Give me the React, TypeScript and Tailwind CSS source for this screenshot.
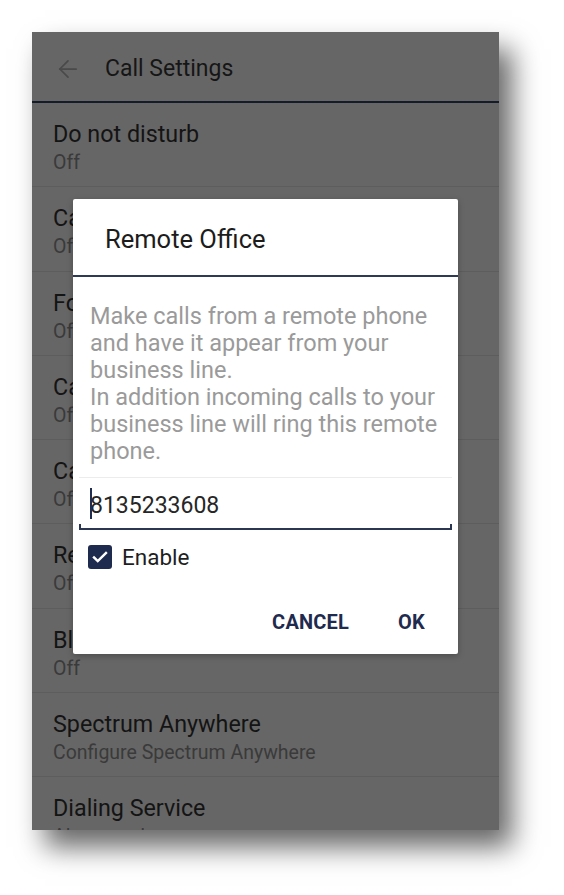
import React from "react";
import { ArrowLeft } from "lucide-react";

type Row = { title: string; sub: string };

const rows: Row[] = [
  { title: "Do not disturb", sub: "Off" },
  { title: "Call Forwarding Always", sub: "Off" },
  { title: "Forward When Busy", sub: "Off" },
  { title: "Call Forwarding No Answer", sub: "Off" },
  { title: "Call Forwarding Not Reachable", sub: "Off" },
  { title: "Remote Office", sub: "Off" },
  { title: "Block Caller ID", sub: "Off" },
  { title: "Spectrum Anywhere", sub: "Configure Spectrum Anywhere" },
  { title: "Dialing Service", sub: "Always ask" },
];

const font = { fontFamily: "Roboto, 'Noto Sans', sans-serif" };

function SettingsRow({ row }: { row: Row }) {
  return (
    <div className="h-[84.25px] shrink-0 border-b border-[#5d5d5d] pl-[21px] pt-[17px]">
      <div className="text-[23.3px] leading-[29px] text-[#141414]">{row.title}</div>
      <div className="mt-[1px] text-[19.5px] leading-[26px] text-[#3a3a3a]">{row.sub}</div>
    </div>
  );
}

function RemoteOfficeDialog() {
  return (
    <div className="absolute left-[41px] top-[167px] flex h-[455px] w-[385px] flex-col rounded-[2px] bg-white shadow-[0_2px_6px_rgba(0,0,0,0.25)]">
      <div className="h-[76px] shrink-0 pl-[32px] pt-[25px] text-[25.5px] leading-[31px] text-[#1c1c1c]">
        Remote Office
      </div>
      <div className="h-[2px] shrink-0 bg-[#2f3a54]" />
      <div className="flex h-[200px] shrink-0 flex-col pl-[17px] pt-[26px] text-[23.5px] leading-[27px] text-[#9a9a9a]">
        <span className="whitespace-nowrap">Make calls from a remote phone</span>
        <span className="whitespace-nowrap">and have it appear from your</span>
        <span className="whitespace-nowrap">business line.</span>
        <span className="whitespace-nowrap">In addition incoming calls to your</span>
        <span className="whitespace-nowrap">business line will ring this remote</span>
        <span className="whitespace-nowrap">phone.</span>
      </div>
      <div className="mx-[6px] h-px shrink-0 bg-[#ececec]" />
      <div className="relative mx-[6px] h-[52px] shrink-0">
        <div className="pl-[11px] pt-[12px] text-[23px] leading-[31px] text-[#262626]">8135233608</div>
        <div className="absolute left-[11px] top-[10px] h-[31px] w-[2px] bg-[#1f2d50]" />
        <div className="absolute bottom-0 left-0 right-0 h-[2px] bg-[#2b3752]" />
        <div className="absolute bottom-0 left-0 h-[6px] w-[2px] bg-[#2b3752]" />
        <div className="absolute bottom-0 right-0 h-[6px] w-[2px] bg-[#2b3752]" />
      </div>
      <div className="flex h-[52px] shrink-0 items-center gap-[10px] pl-[15px] pt-[2px]">
        <div className="flex h-[24px] w-[24px] items-center justify-center rounded-[3px] bg-[#1f2b4e]">
          <svg width="18" height="18" viewBox="0 0 24 24" fill="none">
            <path d="M4 12.5l5 5L20 6.5" stroke="white" strokeWidth="3.2" strokeLinecap="square" />
          </svg>
        </div>
        <span className="text-[22.5px] leading-[28px] text-[#1e1e1e]">Enable</span>
      </div>
      <div className="flex flex-1 items-start justify-end gap-[49px] pr-[33px] pt-[26px]">
        <span className="text-[20px] font-bold leading-[28px] tracking-[0.2px] text-[#1f2b4e]">CANCEL</span>
        <span className="text-[20px] font-bold leading-[28px] tracking-[0.2px] text-[#1f2b4e]">OK</span>
      </div>
    </div>
  );
}

export default function App() {
  return (
    <div className="min-h-[895px] bg-white pl-[32px] pt-[32px]" style={font}>
      <div className="relative flex h-[798px] w-[467px] flex-col overflow-hidden bg-[#666666] shadow-[13px_17px_26px_rgba(0,0,0,0.6)]">
        <div className="flex h-[71px] shrink-0 items-center border-b-2 border-[#141b2b] pl-[22px] pt-[4px]">
          <ArrowLeft size={28} strokeWidth={1.5} className="text-[#4a4a4a]" />
          <span className="ml-[23px] text-[23px] leading-[29px] text-[#161616]">Call Settings</span>
        </div>
        {rows.map((r) => (
          <SettingsRow key={r.title} row={r} />
        ))}
        <RemoteOfficeDialog />
      </div>
    </div>
  );
}
